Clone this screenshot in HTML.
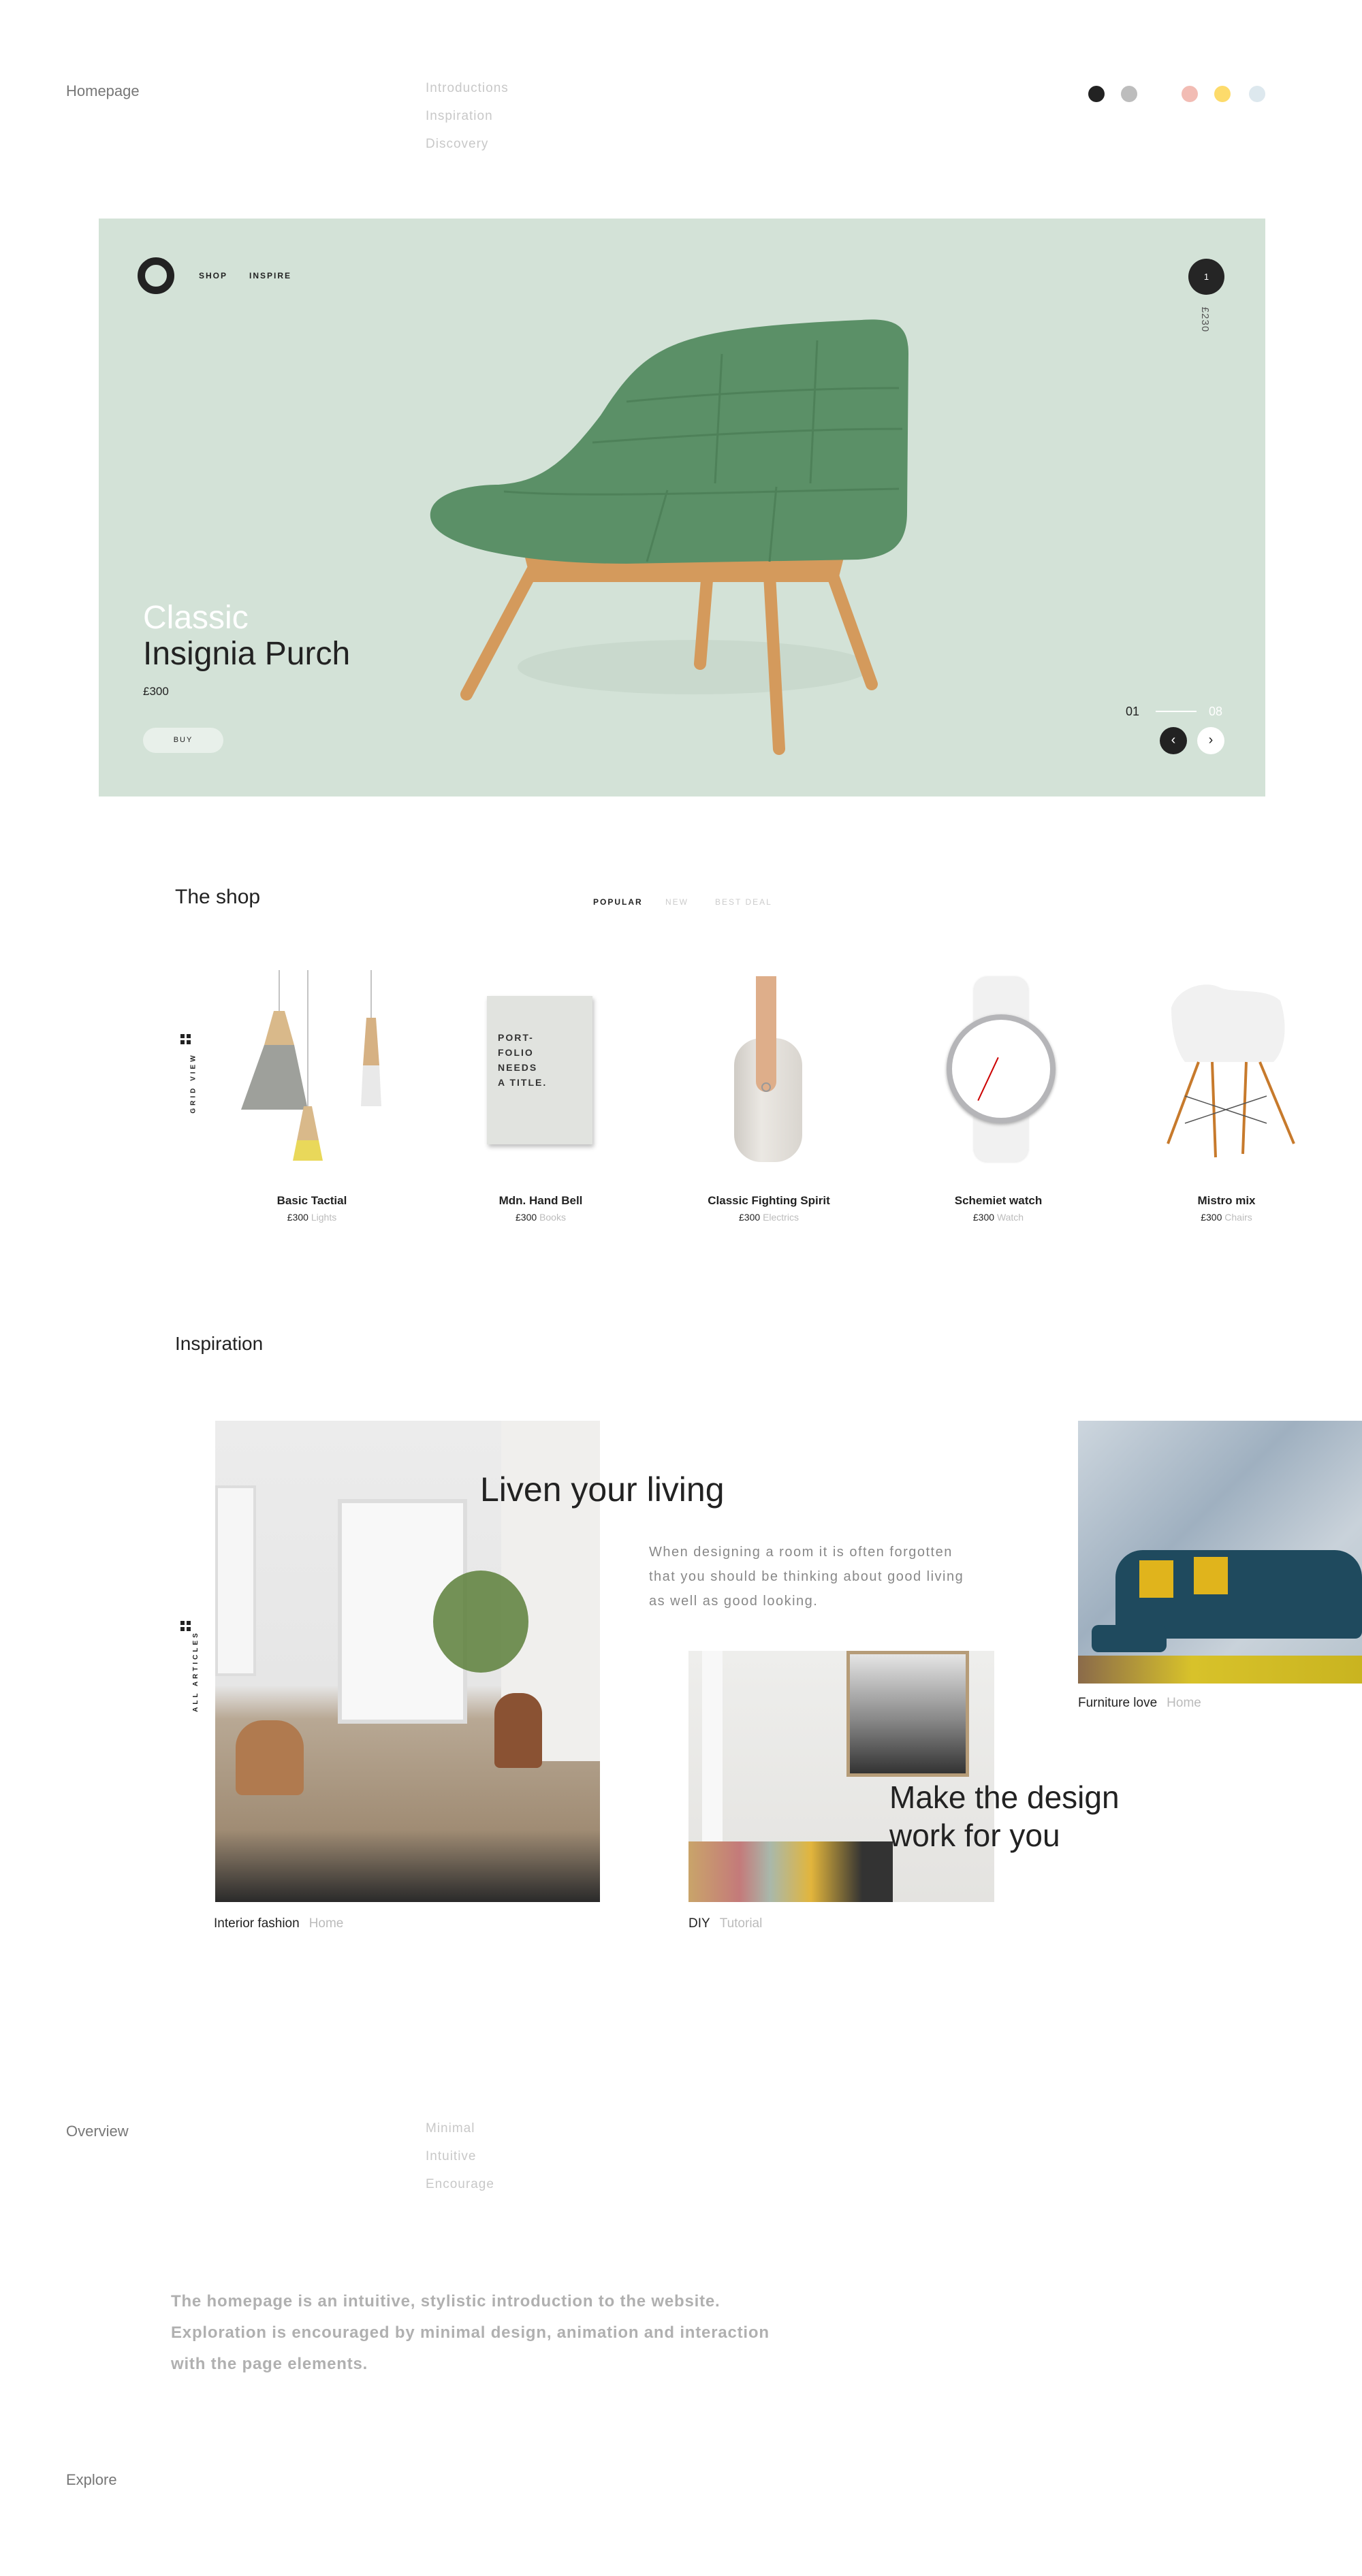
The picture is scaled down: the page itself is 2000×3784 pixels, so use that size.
<!DOCTYPE html>
<html><head><meta charset="utf-8">
<style>
*{margin:0;padding:0;box-sizing:border-box}
body{width:2000px;height:3784px;background:#fff;position:relative;overflow:hidden;font-family:"Liberation Sans",sans-serif;color:#222}
.a{position:absolute;white-space:nowrap;line-height:1}
.nav{color:#c8c8c8;font-size:19px;letter-spacing:1px}
.lbl{color:#777;font-size:22px}
.dot{position:absolute;width:24px;height:24px;border-radius:50%;top:126px}
.pn{font-size:17px;font-weight:bold;color:#222;text-align:center;width:300px}
.pp{font-size:14px;color:#222;text-align:center;width:300px}
.pp span{color:#bbb}
.cap{font-size:19px;color:#222}
.cap span{color:#bbb;margin-left:14px}
</style></head><body>

<div class="a lbl" style="left:97px;top:123px">Homepage</div>
<div class="a nav" style="left:625px;top:120px">Introductions</div>
<div class="a nav" style="left:625px;top:161px">Inspiration</div>
<div class="a nav" style="left:625px;top:202px">Discovery</div>
<div class="dot" style="left:1598px;background:#222"></div>
<div class="dot" style="left:1646px;background:#bdbdbd"></div>
<div class="dot" style="left:1735px;background:#f2bcb4"></div>
<div class="dot" style="left:1783px;background:#fddb6b"></div>
<div class="dot" style="left:1834px;background:#dde8ee"></div>

<!-- hero -->
<div style="position:absolute;left:145px;top:321px;width:1713px;height:849px;background:#d3e2d7"></div>
<div style="position:absolute;left:202px;top:378px;width:54px;height:54px;border-radius:50%;border:11px solid #222"></div>
<div class="a" style="left:292px;top:399px;font-size:12px;letter-spacing:2px;font-weight:bold">SHOP</div>
<div class="a" style="left:366px;top:399px;font-size:12px;letter-spacing:2px;font-weight:bold">INSPIRE</div>
<div style="position:absolute;left:1745px;top:380px;width:53px;height:53px;border-radius:50%;background:#252525;color:#fff;font-size:13px;text-align:center;line-height:53px">1</div>
<div class="a" style="left:1751px;top:462px;font-size:15px;color:#555;transform:rotate(90deg);letter-spacing:1px">£230</div>

<svg style="position:absolute;left:620px;top:460px" width="730" height="660" viewBox="0 0 730 660">
<ellipse cx="400" cy="520" rx="260" ry="40" fill="#c4d6c9" opacity=".7"/>
<g stroke="#d49a5c" stroke-width="18" stroke-linecap="round">
<line x1="165" y1="372" x2="65" y2="560"/>
<line x1="418" y1="392" x2="408" y2="515"/>
<line x1="598" y1="372" x2="660" y2="545"/>
<line x1="510" y1="385" x2="524" y2="640"/>
</g>
<path d="M150,355 L620,355 L610,395 L160,395 Z" fill="#d49a5c"/>
<path d="M12,300 C8,268 60,252 112,252 C170,248 205,225 262,150 C330,45 365,22 645,10 C700,6 714,22 714,60 L712,292 C712,340 690,358 640,362 L300,368 C150,368 18,345 12,300 Z" fill="#5b9067"/>
<path d="M120,262 C250,272 480,262 700,258 M300,130 C400,120 560,110 700,110 M250,190 C380,180 560,170 705,170" stroke="#4e8159" stroke-width="3" fill="none"/>
<path d="M360,260 L330,365 M520,255 L510,365 M440,60 L430,250 M580,40 L570,250" stroke="#4e8159" stroke-width="3" fill="none"/>
</svg>

<div class="a" style="left:210px;top:884px;font-size:48px;color:#fff;font-weight:500">Classic</div>
<div class="a" style="left:210px;top:937px;font-size:48px;color:#222">Insignia Purch</div>
<div class="a" style="left:210px;top:1007px;font-size:17px;color:#222">£300</div>
<div style="position:absolute;left:210px;top:1069px;width:118px;height:37px;border-radius:19px;background:#e8f0ea;font-size:11px;letter-spacing:2px;text-align:center;line-height:37px">BUY</div>
<div class="a" style="left:1653px;top:1036px;font-size:18px">01</div>
<div style="position:absolute;left:1697px;top:1044px;width:60px;height:2px;background:#fff"></div>
<div class="a" style="left:1775px;top:1036px;font-size:18px;color:#fff">08</div>
<div style="position:absolute;left:1703px;top:1068px;width:40px;height:40px;border-radius:50%;background:#222;color:#fff;text-align:center;line-height:38px;font-size:20px">‹</div>
<div style="position:absolute;left:1758px;top:1068px;width:40px;height:40px;border-radius:50%;background:#fff;color:#222;text-align:center;line-height:38px;font-size:20px">›</div>

<!-- shop -->
<div class="a" style="left:257px;top:1303px;font-size:30px">The shop</div>
<div class="a" style="left:871px;top:1319px;font-size:12px;letter-spacing:2px;font-weight:bold">POPULAR</div>
<div class="a" style="left:977px;top:1319px;font-size:12px;letter-spacing:2px;color:#ccc">NEW</div>
<div class="a" style="left:1050px;top:1319px;font-size:12px;letter-spacing:2px;color:#ccc">BEST DEAL</div>
<svg class="a" style="left:265px;top:1519px" width="16" height="16"><rect x="0" y="0" width="6" height="6" fill="#222"/><rect x="9" y="0" width="6" height="6" fill="#222"/><rect x="0" y="9" width="6" height="6" fill="#222"/><rect x="9" y="9" width="6" height="6" fill="#222"/></svg>
<div class="a" style="left:240px;top:1586px;font-size:10px;letter-spacing:4px;transform:rotate(-90deg);font-weight:bold">GRID VIEW</div>

<!-- lamps -->
<svg style="position:absolute;left:340px;top:1425px" width="240" height="290">
<line x1="70" y1="0" x2="70" y2="60" stroke="#888"/><line x1="112" y1="0" x2="112" y2="200" stroke="#888"/><line x1="205" y1="0" x2="205" y2="70" stroke="#888"/>
<path d="M62,60 L78,60 L92,110 L48,110 Z" fill="#d9b98a"/><path d="M48,110 L92,110 L112,205 L14,205 Z" fill="#9ea09b"/>
<path d="M198,70 L212,70 L217,140 L193,140 Z" fill="#d6b183"/><path d="M193,140 L217,140 L220,200 L190,200 Z" fill="#e9e9e9"/>
<path d="M106,200 L118,200 L128,250 L96,250 Z" fill="#d9b98a"/><path d="M96,250 L128,250 L134,280 L90,280 Z" fill="#e9d85a"/>
</svg>
<!-- book -->
<div style="position:absolute;left:715px;top:1463px;width:155px;height:218px;background:#e1e3df;box-shadow:2px 4px 6px rgba(0,0,0,.25);padding:50px 16px;font-size:14px;font-weight:bold;letter-spacing:2px;line-height:22px;color:#333">PORT-<br>FOLIO<br>NEEDS<br>A TITLE.</div>
<!-- speaker -->
<div style="position:absolute;left:1078px;top:1525px;width:100px;height:182px;border-radius:40px;background:linear-gradient(90deg,#cfcbc5,#ebe8e3 40%,#d9d5cf)"></div>
<div style="position:absolute;left:1110px;top:1434px;width:30px;height:170px;border-radius:0 0 15px 15px;background:#deae8a"></div>
<div style="position:absolute;left:1118px;top:1590px;width:14px;height:14px;border-radius:50%;border:2px solid #999"></div>
<!-- watch -->
<div style="position:absolute;left:1430px;top:1435px;width:80px;height:272px;border-radius:20px;background:#f1f1f1;box-shadow:0 0 3px #ddd"></div>
<div style="position:absolute;left:1390px;top:1490px;width:160px;height:160px;border-radius:50%;background:#fff;border:8px solid #b5b5b8;box-shadow:0 2px 5px #aaa"></div>
<div style="position:absolute;left:1450px;top:1550px;width:2px;height:70px;background:#c00;transform:rotate(25deg)"></div>
<!-- chair -->
<svg style="position:absolute;left:1700px;top:1440px" width="210" height="270">
<path d="M20,40 C30,10 70,0 90,10 C110,20 160,10 180,30 C190,60 190,100 170,120 L40,120 C25,100 20,70 20,40Z" fill="#f1f1f1"/>
<g stroke="#c77a2c" stroke-width="4"><line x1="60" y1="120" x2="15" y2="240"/><line x1="80" y1="120" x2="85" y2="260"/><line x1="150" y1="120" x2="200" y2="240"/><line x1="130" y1="120" x2="125" y2="255"/></g>
<g stroke="#555" stroke-width="1.5"><line x1="40" y1="170" x2="160" y2="210"/><line x1="160" y1="170" x2="40" y2="210"/></g>
</svg>

<div class="a pn" style="left:308px;top:1755px">Basic Tactial</div>
<div class="a pp" style="left:308px;top:1781px">£300 <span>Lights</span></div>
<div class="a pn" style="left:644px;top:1755px">Mdn. Hand Bell</div>
<div class="a pp" style="left:644px;top:1781px">£300 <span>Books</span></div>
<div class="a pn" style="left:979px;top:1755px">Classic Fighting Spirit</div>
<div class="a pp" style="left:979px;top:1781px">£300 <span>Electrics</span></div>
<div class="a pn" style="left:1316px;top:1755px">Schemiet watch</div>
<div class="a pp" style="left:1316px;top:1781px">£300 <span>Watch</span></div>
<div class="a pn" style="left:1651px;top:1755px">Mistro mix</div>
<div class="a pp" style="left:1651px;top:1781px">£300 <span>Chairs</span></div>

<!-- inspiration -->
<div class="a" style="left:257px;top:1960px;font-size:28px">Inspiration</div>
<svg class="a" style="left:265px;top:2381px" width="16" height="16"><rect x="0" y="0" width="6" height="6" fill="#222"/><rect x="9" y="0" width="6" height="6" fill="#222"/><rect x="0" y="9" width="6" height="6" fill="#222"/><rect x="9" y="9" width="6" height="6" fill="#222"/></svg>
<div class="a" style="left:228px;top:2450px;font-size:10px;letter-spacing:4px;transform:rotate(-90deg);font-weight:bold">ALL ARTICLES</div>

<div style="position:absolute;left:316px;top:2087px;width:565px;height:707px;background:linear-gradient(180deg,#ececec 0%,#e6e6e6 55%,#b8a894 62%,#a08c74 85%,#2a2a2a 100%);overflow:hidden">
<div style="position:absolute;left:0;top:95px;width:60px;height:280px;background:#f6f6f6;border:4px solid #ddd"></div>
<div style="position:absolute;left:180px;top:115px;width:190px;height:330px;background:#f8f8f8;border:6px solid #ddd"></div>
<div style="position:absolute;left:420px;top:0;width:145px;height:500px;background:#f0efed"></div>
<div style="position:absolute;left:320px;top:220px;width:140px;height:150px;border-radius:50%;background:#5c7f3a;opacity:.85"></div>
<div style="position:absolute;left:30px;top:440px;width:100px;height:110px;border-radius:40px 40px 10px 10px;background:#b07a4f"></div>
<div style="position:absolute;left:410px;top:400px;width:70px;height:110px;border-radius:30px 30px 8px 8px;background:#8a5233"></div>
</div>
<div class="a" style="left:705px;top:2163px;font-size:50px;color:#222">Liven your living</div>
<div class="a" style="left:953px;top:2262px;font-size:20px;color:#888;letter-spacing:1.5px;line-height:36px">When designing a room it is often forgotten<br>that you should be thinking about good living<br>as well as good looking.</div>

<div style="position:absolute;left:1011px;top:2425px;width:449px;height:369px;background:linear-gradient(180deg,#eeeeec,#e4e3e0);overflow:hidden">
<div style="position:absolute;left:232px;top:0;width:180px;height:185px;background:linear-gradient(180deg,#e5e5e5,#888 55%,#333);border:5px solid #b69c78"></div>
<div style="position:absolute;left:20px;top:0;width:30px;height:369px;background:#f8f8f8"></div>
<div style="position:absolute;left:0;top:280px;width:300px;height:89px;background:linear-gradient(90deg,#c9a46a,#c47a7a 25%,#a9b8ab 40%,#e2b53c 60%,#333 85%)"></div>
</div>
<div class="a" style="left:1306px;top:2612px;font-size:46px;color:#222;line-height:56px">Make the design<br>work for you</div>

<div style="position:absolute;left:1583px;top:2087px;width:417px;height:386px;background:linear-gradient(135deg,#cdd6de,#9fb0c0 40%,#c9d2da 70%,#b5c2cc);overflow:hidden">
<div style="position:absolute;left:55px;top:190px;width:362px;height:130px;border-radius:40px 40px 10px 10px;background:#1f4a5e"></div>
<div style="position:absolute;left:20px;top:300px;width:110px;height:40px;border-radius:10px;background:#1f4a5e"></div>
<div style="position:absolute;left:90px;top:205px;width:50px;height:55px;background:#e0b41c"></div>
<div style="position:absolute;left:170px;top:200px;width:50px;height:55px;background:#e0b41c"></div>
<div style="position:absolute;left:0;top:345px;width:417px;height:41px;background:linear-gradient(90deg,#8a6a4a,#d8c22a 40%,#c9b420)"></div>
</div>

<div class="a cap" style="left:314px;top:2816px">Interior fashion<span>Home</span></div>
<div class="a cap" style="left:1011px;top:2816px">DIY<span>Tutorial</span></div>
<div class="a cap" style="left:1583px;top:2492px">Furniture love<span>Home</span></div>

<!-- overview -->
<div class="a lbl" style="left:97px;top:3120px">Overview</div>
<div class="a nav" style="left:625px;top:3117px">Minimal</div>
<div class="a nav" style="left:625px;top:3158px">Intuitive</div>
<div class="a nav" style="left:625px;top:3199px">Encourage</div>
<div class="a" style="left:251px;top:3358px;font-size:24px;color:#b0b0b0;line-height:46px;letter-spacing:.8px;font-weight:bold">The homepage is an intuitive, stylistic introduction to the website.<br>Exploration is encouraged by minimal design, animation and interaction<br>with the page elements.</div>
<div class="a lbl" style="left:97px;top:3632px">Explore</div>
</body></html>
